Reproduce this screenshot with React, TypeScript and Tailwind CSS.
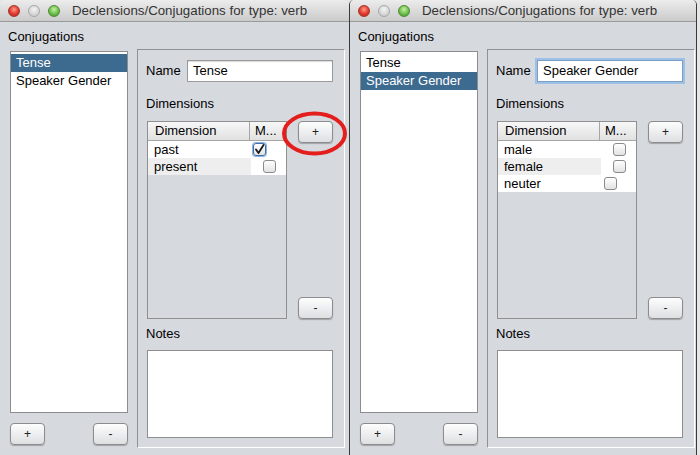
import * as React from 'react';

type Row = { label: string; checked?: boolean; focused?: boolean; offset: string };

const btnClass =
  'flex h-[22px] w-[35px] items-center justify-center rounded-[4px] border border-[#8c8c8c] bg-gradient-to-b from-[#fdfdfd] to-[#dedfe2] text-[12px] leading-none text-[#222] shadow-[0_1px_1px_rgba(0,0,0,0.25)]';

function TitleBar() {
  return (
    <div className="flex h-[22px] shrink-0 items-center border-b border-[#9a9a9a] bg-gradient-to-b from-[#ececec] to-[#cbcbcb] pl-[8px]">
      <div className="flex items-center gap-[8px]">
        <div className="h-[12px] w-[12px] rounded-full border border-[#a3342a] bg-[radial-gradient(circle_at_50%_35%,#ff9a8a,#e0392b_55%,#b3261b)]" />
        <div className="h-[12px] w-[12px] rounded-full border border-[#a6a6a6] bg-[radial-gradient(circle_at_50%_35%,#f4f4f4,#d6d6d6_60%,#c2c2c2)]" />
        <div className="h-[12px] w-[12px] rounded-full border border-[#4f8a34] bg-[radial-gradient(circle_at_50%_35%,#c6f0a4,#6cc04a_55%,#3e8f2a)]" />
      </div>
      <div className="ml-[12px] text-[13.3px] leading-[16px] text-[#333]">Declensions/Conjugations for type: verb</div>
    </div>
  );
}

function CheckBox({ checked, focused }: { checked?: boolean; focused?: boolean }) {
  return (
    <div
      className={
        'flex h-[13px] w-[13px] items-center justify-center rounded-[3px] border bg-gradient-to-b from-[#ffffff] to-[#e2e2e2] ' +
        (focused ? 'border-[#3f6fa8] shadow-[0_0_0_1px_#8fb3dc]' : 'border-[#8a8a8a]')
      }
    >
      {checked && (
        <svg width="11" height="11" viewBox="0 0 11 11">
          <path d="M2 5.5 L4.5 9 L9.5 1" fill="none" stroke="#1a1a1a" strokeWidth="1.8" strokeLinecap="round" strokeLinejoin="round" />
        </svg>
      )}
    </div>
  );
}

function Window({
  sel,
  name,
  rows,
  focusName,
  className,
}: {
  sel: number;
  name: string;
  rows: Row[];
  focusName?: boolean;
  className: string;
}) {
  const items = ['Tense', 'Speaker Gender'];
  return (
    <div className={'flex h-[455px] shrink-0 flex-col overflow-hidden rounded-t-[5px] bg-[#d6d9de] ' + className}>
      <TitleBar />
      <div className="pl-[8px] pt-[7px] text-[13px] leading-[16px] text-black">Conjugations</div>
      <div className="mt-[4px] flex flex-1">
        {/* list column */}
        <div className="ml-[10px] flex w-[118px] flex-col pt-[2px]">
          <div className="h-[362px] border border-[#8d8d8d] bg-white pt-[2px]">
            {items.map((it, i) => (
              <div
                key={it}
                className={
                  'h-[18px] pl-[5px] text-[13px] leading-[18px] ' +
                  (i === sel ? 'bg-[#3d6a8f] text-white' : 'text-black')
                }
              >
                {it}
              </div>
            ))}
          </div>
          <div className="mt-[10px] flex justify-between">
            <div className={btnClass}>+</div>
            <div className={btnClass}>-</div>
          </div>
        </div>

        {/* detail panel */}
        <div className="ml-[9px] flex h-[399px] w-[208px] flex-col border-t border-l border-r border-b border-t-[#8e9196] border-l-[#8e9196] border-r-white border-b-white pl-[8px]">
          <div className="mt-[10px] flex items-center">
            <div className="w-[41px] text-[13px] leading-[16px] text-black">Name</div>
            <div
              className={
                'flex h-[22px] w-[146px] items-center bg-white pl-[5px] text-[13px] text-black ' +
                (focusName
                  ? 'border border-[#7d9ec4] shadow-[0_0_0_2px_#9cc0e6]'
                  : 'border border-[#9a9a9a] shadow-[inset_0_1px_1px_rgba(0,0,0,0.15)]')
              }
            >
              {name}
            </div>
          </div>
          <div className="mt-[14px] text-[13px] leading-[16px] text-black">Dimensions</div>
          <div className="mt-[9px] flex">
            <div className="ml-[1px] flex h-[198px] w-[140px] flex-col border border-[#8f8f8f]">
              <div className="flex h-[19px] shrink-0 border-b border-[#a6a6a6] bg-gradient-to-b from-[#f7f7f7] to-[#e1e1e1] text-[13px] leading-[18px] text-black">
                <div className="w-[102px] border-r border-[#a6a6a6] pl-[7px]">Dimension</div>
                <div className="pl-[5px]">M...</div>
              </div>
              {rows.map((r, i) => (
                <div key={r.label} className="flex h-[17px] text-[13px] leading-[17px] text-black">
                  <div className={'w-[103px] pl-[6px] ' + (i % 2 === 1 ? 'bg-[#eeeeee]' : 'bg-white')}>{r.label}</div>
                  <div className={'flex flex-1 items-center bg-white ' + r.offset}>
                    <CheckBox checked={r.checked} focused={r.focused} />
                  </div>
                </div>
              ))}
            </div>
            <div className="ml-[11px] flex flex-col justify-between">
              <div className={btnClass}>+</div>
              <div className={btnClass}>-</div>
            </div>
          </div>
          <div className="mt-[7px] text-[13px] leading-[16px] text-black">Notes</div>
          <div className="ml-[1px] mt-[8px] h-[88px] w-[186px] border border-[#8d8d8d] bg-white" />
        </div>
      </div>
    </div>
  );
}

export default function App() {
  return (
    <div className="relative flex h-[455px] w-[700px] overflow-hidden bg-[#e6e6e6] font-['Liberation_Sans',Arial,sans-serif]">
      <Window
        sel={0}
        name="Tense"
        className="w-[349px]"
        rows={[
          { label: 'past', checked: true, focused: true, offset: 'pl-[2px]' },
          { label: 'present', offset: 'pl-[12px]' },
        ]}
      />
      <Window
        sel={1}
        name="Speaker Gender"
        focusName
        className="w-[348px] border-l border-r border-[#3a3a3a]"
        rows={[
          { label: 'male', offset: 'pl-[12px]' },
          { label: 'female', offset: 'pl-[12px]' },
          { label: 'neuter', offset: 'pl-[3px]' },
        ]}
      />
      <svg className="absolute left-[280px] top-[110px]" width="70" height="48" viewBox="0 0 70 48">
        <ellipse cx="34.5" cy="23.5" rx="30.5" ry="20" fill="none" stroke="#e41e1c" strokeWidth="4" />
      </svg>
    </div>
  );
}
